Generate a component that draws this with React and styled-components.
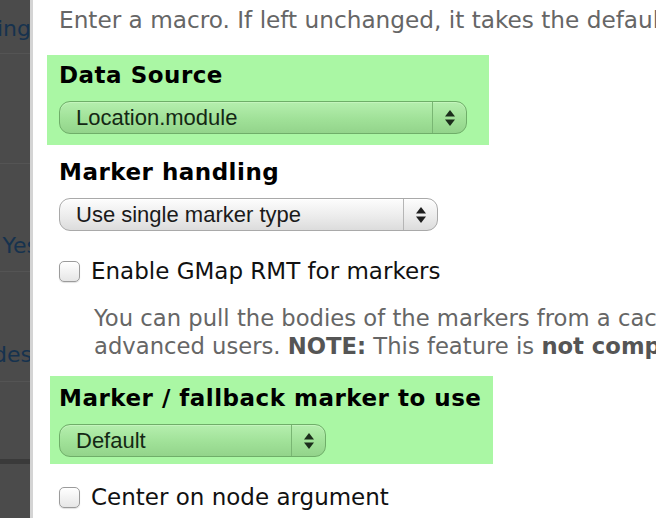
import React from "react";
import styled, { createGlobalStyle } from "styled-components";

const GlobalStyle = createGlobalStyle`
  html, body {
    margin: 0;
    padding: 0;
    background: #ffffff;
  }
  body {
    font-family: "DejaVu Sans", "Liberation Sans", sans-serif;
  }
`;

const Page = styled.div`
  display: flex;
  width: 656px;
  height: 518px;
  overflow: hidden;
`;

const Sidebar = styled.div`
  flex: 0 0 30px;
  display: flex;
  flex-direction: column;
  background: #4b4b4b;
  border-right: 3px solid #d4d4d4;
  overflow: hidden;
`;

const SideRow = styled.div`
  flex: 0 0 ${(p) => p.h}px;
  display: flex;
  align-items: flex-end;
  justify-content: flex-end;
  box-sizing: border-box;
  border-bottom: 1px solid ${(p) => (p.dark ? "#3a3a3a" : "#545454")};
  ${(p) => (p.dark ? "border-bottom-width: 5px;" : "")}
  padding-bottom: ${(p) => p.pb || 0}px;
  font-size: 22px;
  color: #16324e;
  white-space: nowrap;
`;

const SideText = styled.span`
  margin-right: ${(p) => p.clip || 0}px;
`;

const Main = styled.div`
  flex: 1;
  background: #ffffff;
  padding: 6px 0 0 26px;
  overflow: hidden;
  white-space: nowrap;
`;

const Intro = styled.div`
  font-size: 23.2px;
  line-height: 28px;
  color: #666666;
`;

const Highlight = styled.div`
  width: ${(p) => p.w}px;
  margin: ${(p) => p.mt}px 0 0 ${(p) => p.ml}px;
  padding: ${(p) => p.pt}px 0 ${(p) => p.pb}px ${(p) => -p.ml}px;
  box-sizing: border-box;
  background: #aaf7a4;
`;

const Heading = styled.div`
  font-size: 23px;
  font-weight: bold;
  line-height: 28px;
  letter-spacing: 0.5px;
  color: #000000;
  margin-top: ${(p) => p.mt || 0}px;
`;

const SelectBox = styled.div`
  display: flex;
  align-items: stretch;
  width: ${(p) => p.w}px;
  height: 33px;
  margin-top: 12px;
  box-sizing: border-box;
  border-radius: 11px;
  border: 1px solid ${(p) => (p.green ? "#6fae69" : "#a9a9a9")};
  background: ${(p) =>
    p.green
      ? "linear-gradient(#b5efae, #a0e198 55%, #93d48b)"
      : "linear-gradient(#fdfdfd, #ececec 55%, #dcdcdc)"};
  box-shadow: inset 0 1px 0 ${(p) => (p.green ? "#c4f5bd" : "#ffffff")};
  font-family: "Liberation Sans", Arial, sans-serif;
  font-size: 22px;
  color: ${(p) => (p.green ? "#142814" : "#1a1a1a")};
`;

const SelectLabel = styled.div`
  flex: 1;
  display: flex;
  align-items: center;
  padding-left: 16px;
  border-right: 1px solid ${(p) => (p.green ? "#79b673" : "#b5b5b5")};
`;

const SelectArrows = styled.div`
  flex: 0 0 33px;
  display: flex;
  align-items: center;
  justify-content: center;
`;

const CheckRow = styled.div`
  display: flex;
  align-items: center;
  gap: 11px;
  margin-top: ${(p) => p.mt}px;
  font-size: 23px;
  line-height: 28px;
  color: #111111;
`;

const Checkbox = styled.span`
  width: 19px;
  height: 19px;
  border: 1px solid #9b9b9b;
  border-radius: 5px;
  background: linear-gradient(#ffffff, #e6e6e6);
  box-shadow: 0 1px 1px rgba(0, 0, 0, 0.12);
`;

const Description = styled.div`
  margin: 19px 0 0 35px;
  font-size: 22.7px;
  line-height: 28px;
  color: #666666;

  b {
    color: #555555;
  }
`;

function Arrows({ green }) {
  const c = green ? "#1c2e1c" : "#1e1e1e";
  return (
    <svg width="10" height="16" viewBox="0 0 10 16">
      <polygon points="5,0 10,6.5 0,6.5" fill={c} />
      <polygon points="0,9.5 10,9.5 5,16" fill={c} />
    </svg>
  );
}

function Select({ value, w, green }) {
  return (
    <SelectBox w={w} green={green}>
      <SelectLabel green={green}>{value}</SelectLabel>
      <SelectArrows>
        <Arrows green={green} />
      </SelectArrows>
    </SelectBox>
  );
}

export default function App() {
  return (
    <Page>
      <GlobalStyle />
      <Sidebar>
        <SideRow h={54} pb={12}>
          <SideText clip={-1}>Setting</SideText>
        </SideRow>
        <SideRow h={110} />
        <SideRow h={108} pb={13}>
          <SideText clip={-8}>Yes</SideText>
        </SideRow>
        <SideRow h={110} pb={14}>
          <SideText clip={-2}>Nodes</SideText>
        </SideRow>
        <SideRow h={82} dark />
      </Sidebar>
      <Main>
        <Intro>Enter a macro. If left unchanged, it takes the default value.</Intro>

        <Highlight w={442} mt={21} ml={-12} pt={6} pb={11}>
          <Heading>Data Source</Heading>
          <Select value="Location.module" w={408} green />
        </Highlight>

        <Heading mt={13}>Marker handling</Heading>
        <Select value="Use single marker type" w={379} />

        <CheckRow mt={26}>
          <Checkbox />
          Enable GMap RMT for markers
        </CheckRow>

        <Description>
          You can pull the bodies of the markers from a cache of RMT nodes.
          <br />
          advanced users. <b>NOTE:</b> This feature is <b>not compatible</b>
        </Description>

        <Highlight w={443} mt={16} ml={-9} pt={8} pb={7}>
          <Heading>Marker / fallback marker to use</Heading>
          <Select value="Default" w={267} green />
        </Highlight>

        <CheckRow mt={19}>
          <Checkbox />
          Center on node argument
        </CheckRow>
      </Main>
    </Page>
  );
}
